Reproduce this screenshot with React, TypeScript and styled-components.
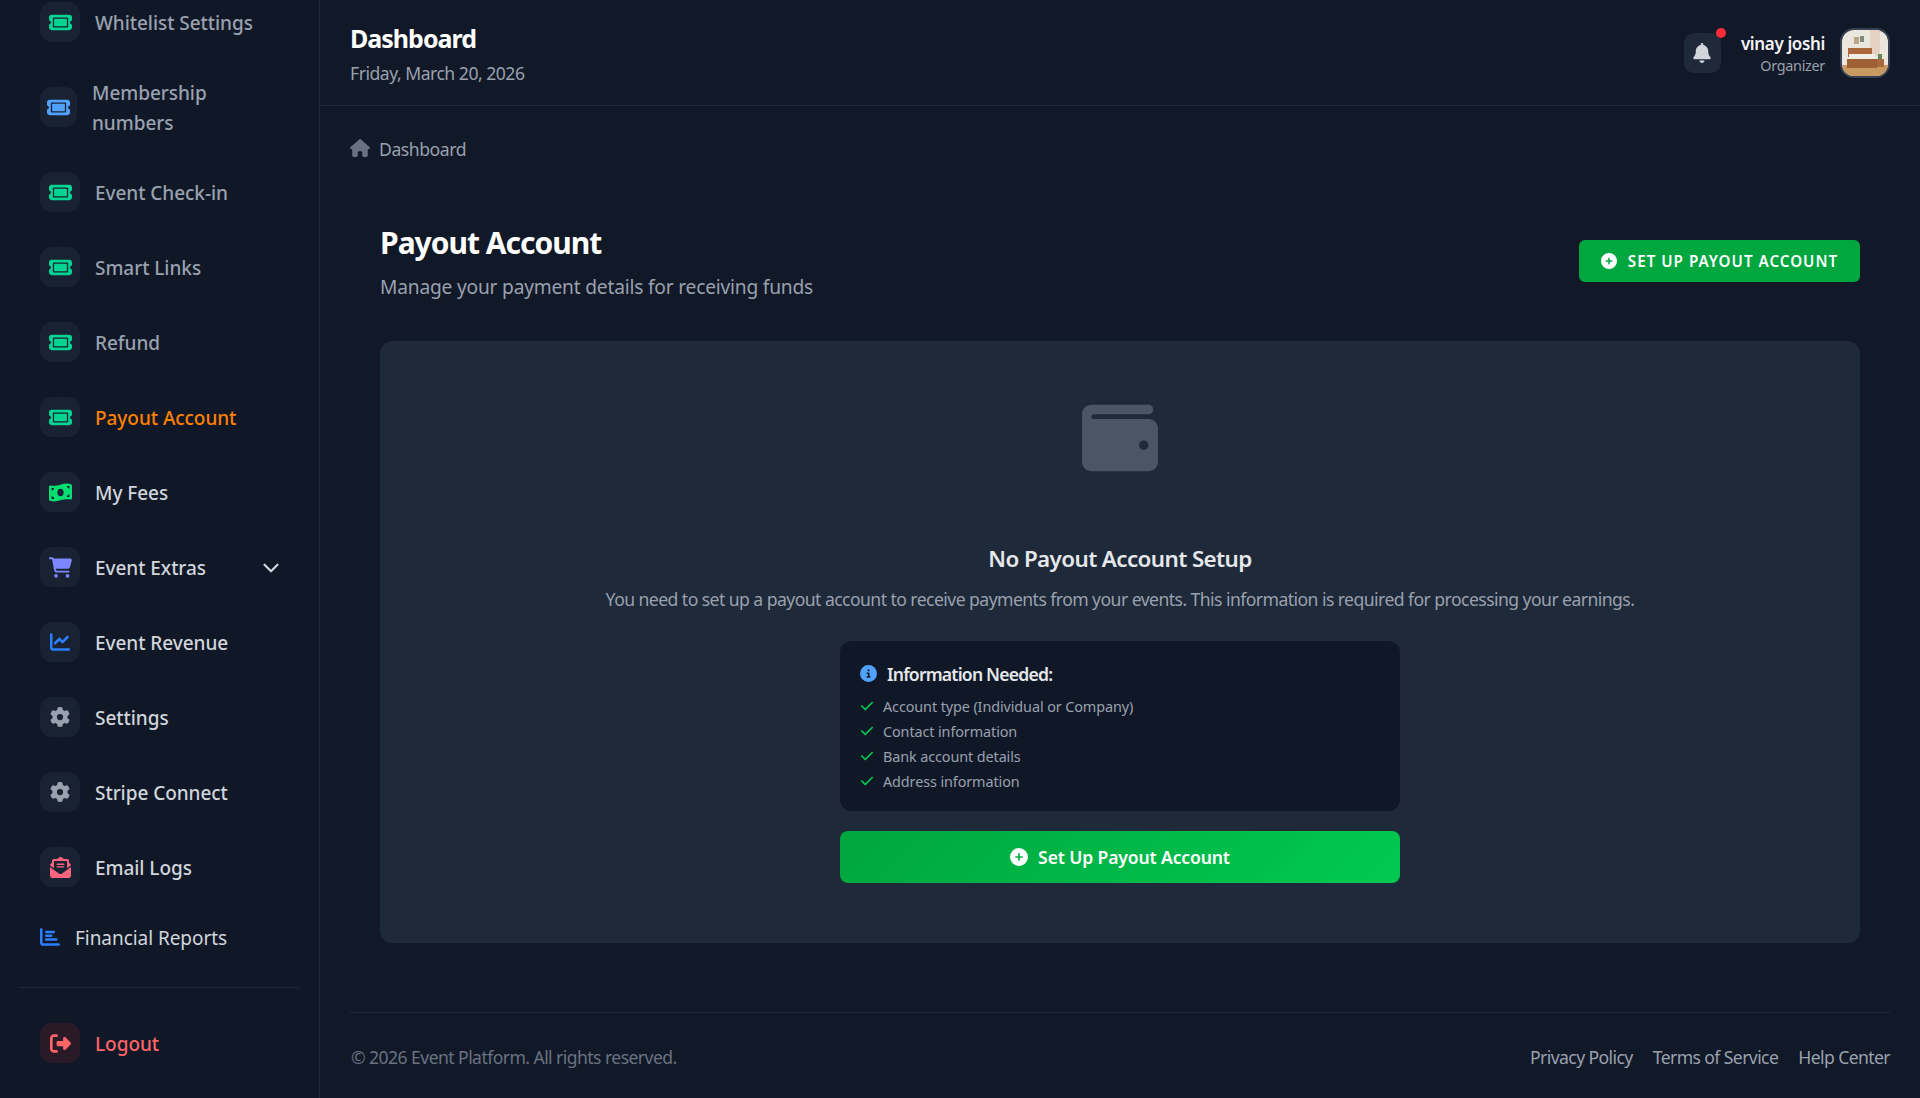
import React from "react";
import styled, { createGlobalStyle } from "styled-components";
import { ChevronDown } from "lucide-react";
import {
  FaTicket, FaMoneyBillWave, FaCartShopping, FaChartLine, FaGear, FaEnvelopeOpenText,
  FaChartBar, FaRightFromBracket, FaBell, FaHouse, FaCirclePlus, FaWallet, FaCircleInfo, FaCheck,
} from "react-icons/fa6";

const Global = createGlobalStyle`
  * { box-sizing: border-box; }
  html, body { margin: 0; padding: 0; background: #111827; }
  body { font-family: "Noto Sans", "Open Sans", sans-serif; }
`;

const Shell = styled.div`
  display: flex;
  width: 1920px;
  height: 1098px;
  overflow: hidden;
  background: #111827;
`;

const Sidebar = styled.aside`
  width: 320px;
  flex: none;
  height: 100%;
  background: #101828;
  border-right: 1px solid #1e2939;
  display: flex;
  flex-direction: column;
  overflow: hidden;
`;

const NavList = styled.nav`
  display: flex;
  flex-direction: column;
  margin-top: -14.5px;
  padding: 0 40px;
`;

const NavRow = styled.div`
  display: flex;
  align-items: center;
  gap: 15px;
  padding: 17.5px 0;
  font-size: 19px;
  line-height: 30px;
  font-weight: 500;
  letter-spacing: -0.05px;
  color: ${(p) => p.$color};
`;

const IconBox = styled.span`
  width: ${(p) => p.$w || 40}px;
  height: 40px;
  flex: none;
  margin: -1px 0 1px;
  display: flex;
  align-items: center;
  justify-content: center;
  border-radius: 12px;
  background: ${(p) => p.$bg || "#182232"};
  color: ${(p) => p.$color};
`;

const Wrapped = styled.span`
  width: 110px;
`;

const Caret = styled(ChevronDown)`
  margin-left: auto;
  margin-right: -5px;
  color: #d1d5dc;
`;

const PlainRow = styled.div`
  display: flex;
  align-items: center;
  gap: 15px;
  margin-top: 16px;
  height: 33px;
  font-size: 19px;
  letter-spacing: -0.05px;
  color: #d1d5dc;
`;

const PlainIcon = styled.span`
  display: flex;
  color: #2b7fff;
  padding-bottom: 3px;
`;

const LogoutSection = styled.div`
  margin: 32px 20px 0;
  border-top: 1px solid #1e2939;
  padding: 19px 20px 0;
`;

const Main = styled.main`
  flex: 1;
  min-width: 0;
  display: flex;
  flex-direction: column;
`;

const Header = styled.header`
  height: 106px;
  flex: none;
  padding: 0 30px;
  display: flex;
  align-items: center;
  justify-content: space-between;
  border-bottom: 1px solid #1e2939;
`;

const TitleBlock = styled.div`
  padding-top: 2px;
`;

const HeaderTitle = styled.h1`
  margin: 0;
  font-size: 25px;
  line-height: 36px;
  font-weight: 700;
  letter-spacing: -1px;
  color: #ffffff;
`;

const HeaderDate = styled.p`
  margin: 3px 0 0;
  font-size: 17.6px;
  line-height: 28px;
  letter-spacing: -0.5px;
  color: #99a1af;
`;

const UserArea = styled.div`
  display: flex;
  align-items: center;
`;

const BellButton = styled.span`
  position: relative;
  width: 37px;
  height: 40px;
  border-radius: 10px;
  background: #1e2939;
  color: #d1d5dc;
  display: flex;
  align-items: center;
  justify-content: center;
`;

const BellDot = styled.span`
  position: absolute;
  right: -5px;
  top: -5px;
  width: 10px;
  height: 10px;
  border-radius: 50%;
  background: #fb2c36;
`;

const UserText = styled.div`
  margin-left: 20px;
  margin-right: 15px;
  padding-top: 2px;
  text-align: right;
`;

const UserName = styled.div`
  font-size: 17px;
  line-height: 24px;
  font-weight: 600;
  letter-spacing: -0.35px;
  color: #f3f4f6;
`;

const UserRole = styled.div`
  font-size: 14.4px;
  line-height: 20px;
  letter-spacing: -0.3px;
  color: #99a1af;
`;

const Avatar = styled.svg`
  width: 50px;
  height: 50px;
  border: 2px solid #364153;
  border-radius: 14px;
  display: block;
`;

const Content = styled.div`
  flex: 1;
  display: flex;
  flex-direction: column;
  padding: 0 30px;
`;

const Breadcrumb = styled.div`
  display: flex;
  align-items: center;
  gap: 9px;
  height: 30px;
  margin-top: 28px;
  font-size: 17.6px;
  letter-spacing: -0.45px;
  color: #99a1af;
`;

const HomeIcon = styled(FaHouse)`
  color: #6a7282;
  margin-bottom: 2px;
`;

const Page = styled.section`
  padding: 0 30px;
  margin-top: 57px;
`;

const PageHead = styled.div`
  display: flex;
  align-items: center;
  justify-content: space-between;
`;

const PageTitle = styled.h2`
  margin: 0;
  font-size: 30px;
  line-height: 44px;
  font-weight: 700;
  letter-spacing: -1px;
  color: #ffffff;
`;

const PageSub = styled.p`
  margin: 7px 0 0;
  font-size: 19.2px;
  line-height: 30px;
  letter-spacing: -0.21px;
  color: #99a1af;
`;

const TopButton = styled.button`
  height: 42px;
  width: 281px;
  margin-bottom: 2px;
  border: 0;
  border-radius: 6px;
  background: #00a63e;
  color: #ffffff;
  font: inherit;
  font-size: 15.2px;
  font-weight: 600;
  letter-spacing: 1px;
  text-transform: uppercase;
  display: flex;
  align-items: center;
  justify-content: center;
  gap: 11px;
`;

const Card = styled.div`
  margin-top: 39px;
  height: 602px;
  border-radius: 12px;
  background: #1e2939;
  display: flex;
  flex-direction: column;
  align-items: center;
  padding-top: 59px;
`;

const WalletIcon = styled(FaWallet)`
  color: #4a5565;
`;

const CardTitle = styled.h3`
  margin: 67px 0 0;
  font-size: 22.4px;
  line-height: 32px;
  font-weight: 600;
  letter-spacing: -0.6px;
  color: #e5e7eb;
`;

const CardText = styled.p`
  margin: 8px 0 0;
  font-size: 17.6px;
  line-height: 32px;
  letter-spacing: -0.56px;
  color: #99a1af;
`;

const InfoBox = styled.div`
  width: 560px;
  height: 170px;
  margin-top: 26px;
  border-radius: 12px;
  background: #101828;
  padding: 21px 20px 0 20px;
`;

const InfoHead = styled.div`
  display: flex;
  align-items: center;
  gap: 10px;
  font-size: 17.6px;
  line-height: 24px;
  font-weight: 600;
  letter-spacing: -0.8px;
  color: #e5e7eb;
`;

const InfoIcon = styled(FaCircleInfo)`
  color: #51a2ff;
  margin-bottom: 2px;
`;

const CheckList = styled.ul`
  list-style: none;
  margin: 8px 0 0;
  padding: 0;
`;

const CheckItem = styled.li`
  display: flex;
  align-items: center;
  gap: 9px;
  height: 25px;
  font-size: 14.4px;
  letter-spacing: -0.1px;
  color: #99a1af;
`;

const CheckIcon = styled(FaCheck)`
  color: #00c950;
  margin-bottom: 2px;
`;

const BigButton = styled.button`
  width: 560px;
  height: 52px;
  margin-top: 20px;
  border: 0;
  border-radius: 8px;
  background: linear-gradient(135deg, #00a63e, #00c950);
  color: #ffffff;
  font: inherit;
  font-size: 17.6px;
  font-weight: 600;
  letter-spacing: -0.15px;
  display: flex;
  align-items: center;
  justify-content: center;
  gap: 10px;
`;

const Footer = styled.footer`
  margin-top: 69px;
  height: 88px;
  border-top: 1px solid #1e2939;
  display: flex;
  align-items: center;
  justify-content: space-between;
  font-size: 17.6px;
`;

const Copy = styled.span`
  color: #6a7282;
  letter-spacing: -0.57px;
  margin-left: 1px;
`;

const FooterLinks = styled.div`
  display: flex;
  gap: 20px;
  letter-spacing: -0.6px;
  color: #99a1af;
`;

const tickets = [
  { label: "Whitelist Settings" },
  { label: "Membership numbers", color: "#51a2ff", wrap: true },
  { label: "Event Check-in" },
  { label: "Smart Links" },
  { label: "Refund" },
];

function Bedroom() {
  return (
    <Avatar viewBox="0 0 46 46" preserveAspectRatio="none">
      <rect width="46" height="46" fill="#ebe7df" />
      <rect x="28" width="10" height="26" fill="#e6d2c2" />
      <rect x="12" y="7" width="5" height="7" fill="#b9a688" />
      <rect x="18" y="6" width="4" height="6" fill="#7d8a7e" />
      <rect y="35" width="46" height="11" fill="#c99a60" />
      <rect x="6" y="18" width="24" height="9" fill="#ab6a3e" />
      <rect x="7" y="24" width="26" height="6" fill="#f2efe9" />
      <rect x="5" y="29" width="30" height="9" fill="#a06035" />
      <rect x="36" y="24" width="4" height="5" fill="#5f8a52" />
      <rect x="35" y="29" width="7" height="8" fill="#a66a3c" />
    </Avatar>
  );
}

export default function App() {
  return (
    <Shell>
      <Global />
      <Sidebar>
        <NavList>
          {tickets.map((t) => (
            <NavRow key={t.label} $color="#99a1af">
              <IconBox $color={t.color || "#00d492"} $w={t.wrap ? 37 : 40}>
                <FaTicket size={23} />
              </IconBox>
              {t.wrap ? <Wrapped>{t.label}</Wrapped> : t.label}
            </NavRow>
          ))}
          <NavRow $color="#ff8000">
            <IconBox $color="#00d492"><FaTicket size={23} /></IconBox>
            Payout Account
          </NavRow>
          <NavRow $color="#d1d5dc">
            <IconBox $color="#05df72"><FaMoneyBillWave size={23} /></IconBox>
            My Fees
          </NavRow>
          <NavRow $color="#d1d5dc">
            <IconBox $color="#7c86ff"><FaCartShopping size={23} /></IconBox>
            Event Extras
            <Caret size={26} />
          </NavRow>
          <NavRow $color="#d1d5dc">
            <IconBox $color="#2b7fff"><FaChartLine size={20} /></IconBox>
            Event Revenue
          </NavRow>
          <NavRow $color="#d1d5dc">
            <IconBox $color="#99a1af"><FaGear size={20} /></IconBox>
            Settings
          </NavRow>
          <NavRow $color="#d1d5dc">
            <IconBox $color="#99a1af"><FaGear size={20} /></IconBox>
            Stripe Connect
          </NavRow>
          <NavRow $color="#d1d5dc">
            <IconBox $color="#ff637e"><FaEnvelopeOpenText size={21} /></IconBox>
            Email Logs
          </NavRow>
          <PlainRow>
            <PlainIcon><FaChartBar size={20} /></PlainIcon>
            Financial Reports
          </PlainRow>
        </NavList>
        <LogoutSection>
          <NavRow $color="#ff6467">
            <IconBox $color="#ff6467" $bg="#2a1a28"><FaRightFromBracket size={21} /></IconBox>
            Logout
          </NavRow>
        </LogoutSection>
      </Sidebar>
      <Main>
        <Header>
          <TitleBlock>
            <HeaderTitle>Dashboard</HeaderTitle>
            <HeaderDate>Friday, March 20, 2026</HeaderDate>
          </TitleBlock>
          <UserArea>
            <BellButton>
              <FaBell size={20} />
              <BellDot />
            </BellButton>
            <UserText>
              <UserName>vinay joshi</UserName>
              <UserRole>Organizer</UserRole>
            </UserText>
            <Bedroom />
          </UserArea>
        </Header>
        <Content>
          <Breadcrumb>
            <HomeIcon size={20} />
            Dashboard
          </Breadcrumb>
          <Page>
            <PageHead>
              <div>
                <PageTitle>Payout Account</PageTitle>
                <PageSub>Manage your payment details for receiving funds</PageSub>
              </div>
              <TopButton>
                <FaCirclePlus size={16} />
                Set Up Payout Account
              </TopButton>
            </PageHead>
            <Card>
              <WalletIcon size={76} />
              <CardTitle>No Payout Account Setup</CardTitle>
              <CardText>
                You need to set up a payout account to receive payments from your events. This information is required for processing your earnings.
              </CardText>
              <InfoBox>
                <InfoHead>
                  <InfoIcon size={17} />
                  Information Needed:
                </InfoHead>
                <CheckList>
                  {["Account type (Individual or Company)", "Contact information", "Bank account details", "Address information"].map((x) => (
                    <CheckItem key={x}>
                      <CheckIcon size={14} />
                      {x}
                    </CheckItem>
                  ))}
                </CheckList>
              </InfoBox>
              <BigButton>
                <FaCirclePlus size={18} />
                Set Up Payout Account
              </BigButton>
            </Card>
          </Page>
          <Footer>
            <Copy>© 2026 Event Platform. All rights reserved.</Copy>
            <FooterLinks>
              <span>Privacy Policy</span>
              <span>Terms of Service</span>
              <span>Help Center</span>
            </FooterLinks>
          </Footer>
        </Content>
      </Main>
    </Shell>
  );
}
